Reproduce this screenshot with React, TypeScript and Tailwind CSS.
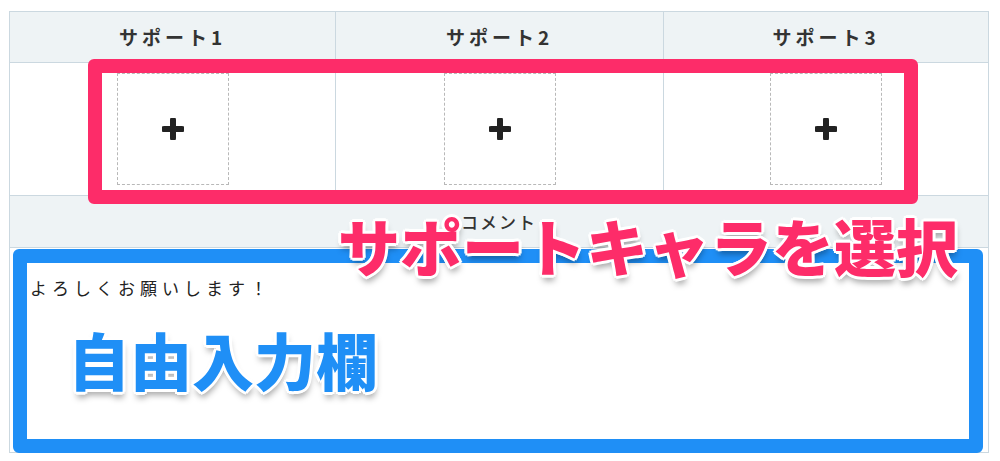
const jp = "font-['Noto_Sans_CJK_JP','Noto_Sans',sans-serif]";

const halo =
  '[text-shadow:3px_0_0_#fff,-3px_0_0_#fff,0_3px_0_#fff,0_-3px_0_#fff,2px_2px_0_#fff,-2px_2px_0_#fff,2px_-2px_0_#fff,-2px_-2px_0_#fff,1px_6px_6px_rgba(0,0,0,0.35)]';

function PlusSlot() {
  return (
    <div className="w-[112px] h-[112px] border border-dashed border-[#b8b8b8] flex items-center justify-center">
      <svg width="22" height="22" viewBox="0 0 22 22">
        <path d="M11 2v18M2 11h18" stroke="#222" strokeWidth="6" strokeLinecap="round" />
      </svg>
    </div>
  );
}

export default function App() {
  const supports = ['サポート1', 'サポート2', 'サポート3'];

  return (
    <div className={`relative w-[1000px] h-[461px] bg-white overflow-hidden ${jp} text-[#333]`}>
      {/* party form table */}
      <div className="ml-[9px] mt-[11px] w-[980px] border border-[#cbd8e0]">
        <div className="grid grid-cols-[326px_328px_1fr] h-[51px] bg-[#eef3f5] border-b border-[#cbd8e0]">
          {supports.map((s, i) => (
            <div
              key={s}
              className={`flex items-center justify-center text-[19px] font-bold tracking-[4px] ${i < 2 ? 'border-r border-[#cbd8e0]' : ''}`}
            >
              {s}
            </div>
          ))}
        </div>
        <div className="grid grid-cols-[326px_328px_1fr] h-[133px] border-b border-[#cbd8e0]">
          {supports.map((s, i) => (
            <div
              key={s}
              className={`flex items-center justify-center ${i < 2 ? 'border-r border-[#cbd8e0]' : ''}`}
            >
              <PlusSlot />
            </div>
          ))}
        </div>
        <div className="h-[52px] bg-[#eef3f5] border-b border-[#cbd8e0] flex items-center justify-center text-[17px] font-medium tracking-[2px]">
          コメント
        </div>
        <div className="h-[204px] pl-[20px] pt-[28px] text-[17px] leading-[24px] tracking-[5px] text-[#222]">
          よろしくお願いします！
        </div>
      </div>

      {/* callout frames */}
      <div className="absolute left-[88px] top-[59px] w-[830px] h-[145px] border-[14px] border-[#fd2c69] rounded-[6px]" />
      <div className="absolute left-[13px] top-[249px] w-[970px] h-[204px] border-[14px] border-[#1f8ff6] rounded-[6px]" />

      {/* callout labels */}
      <div
        className={`absolute left-[338px] top-[209px] text-[62px] leading-[72px] font-black text-[#fd2c69] whitespace-nowrap ${halo}`}
      >
        サポートキャラを選択
      </div>
      <div
        className={`absolute left-[68px] top-[323px] text-[62px] leading-[72px] font-black text-[#1f8ff6] whitespace-nowrap ${halo}`}
      >
        自由入力欄
      </div>
    </div>
  );
}
